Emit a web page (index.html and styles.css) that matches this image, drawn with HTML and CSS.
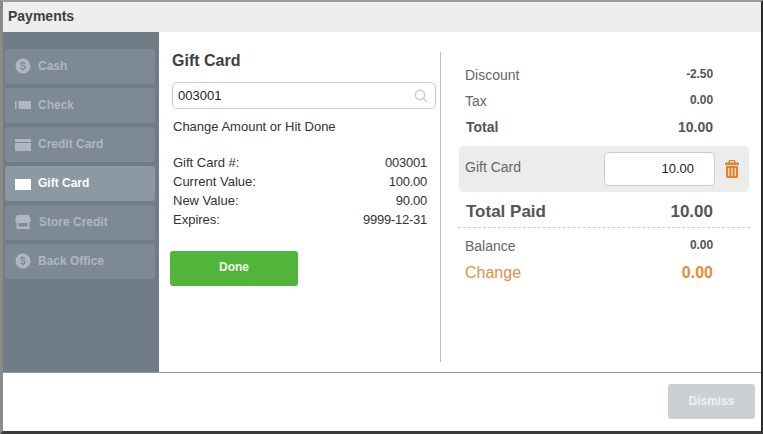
FILE: index.html
```html
<!DOCTYPE html>
<html lang="en">
<head>
<meta charset="utf-8">
<title>Payments</title>
<link rel="stylesheet" href="styles.css">
</head>
<body>
<div class="modal">
  <header class="modal-head">Payments</header>
  <main class="modal-main">
    <nav class="side">
      <a class="side-btn">
        <svg class="ico" viewBox="0 0 16 16"><path fill-rule="evenodd" d="M8 .5a7.5 7.5 0 1 0 0 15 7.5 7.5 0 0 0 0-15zM8 3.200v1.100c1.300.1 2.200.7 2.500 1.700l-1.300.4C9 5.800 8.600 5.400 7.900 5.400c-.7 0-1.100.3-1.100.8 0 .5.4.7 1.500 1 1.500.4 2.300 1 2.300 2.200 0 1.100-.8 1.900-2.100 2.100v1.300H7.400v-1.300c-1.300-.2-2.200-.9-2.400-2l1.300-.4c.2.8.8 1.200 1.600 1.200.8 0 1.300-.3 1.300-.9 0-.5-.4-.8-1.500-1.100C6.300 7.400 5.500 6.800 5.500 5.700c0-1.100.8-1.800 1.900-2.100V3.200z"/></svg>
        <span>Cash</span>
      </a>
      <a class="side-btn">
        <svg class="ico" viewBox="0 0 16 16"><path d="M0 4h1.500v8H0zM3.500 4H16v8H3.500z"/></svg>
        <span>Check</span>
      </a>
      <a class="side-btn">
        <svg class="ico" viewBox="0 0 16 16"><path d="M0 3h16v3H0zM0 7h16v8H0z"/></svg>
        <span>Credit Card</span>
      </a>
      <a class="side-btn is-active">
        <svg class="ico" viewBox="0 0 16 16"><path d="M0 4h16v11H0z"/></svg>
        <span>Gift Card</span>
      </a>
      <a class="side-btn">
        <svg class="ico" viewBox="0 0 16 16"><path fill-rule="evenodd" d="M2 1h12l2 5.500c0 .8-.7 1.500-1.500 1.500v7h-13V8C.7 8 0 7.300 0 6.500zM3.500 9v3.500h9V9z"/></svg>
        <span class="store">Store Credit</span>
      </a>
      <a class="side-btn">
        <svg class="ico" viewBox="0 0 16 16"><path fill-rule="evenodd" d="M8 .5a7.500 7.500 0 1 0 0 15 7.500 7.500 0 0 0 0-15zM8 3.200v1.100c1.300.1 2.200.7 2.500 1.700l-1.300.4C9 5.800 8.600 5.400 7.900 5.400c-.7 0-1.100.3-1.100.8 0 .5.4.7 1.500 1 1.500.4 2.300 1 2.300 2.200 0 1.100-.8 1.900-2.100 2.100v1.300H7.400v-1.300c-1.300-.2-2.200-.9-2.400-2l1.300-.4c.2.8.8 1.200 1.600 1.200.8 0 1.300-.3 1.300-.9 0-.5-.4-.8-1.500-1.100C6.300 7.400 5.500 6.800 5.500 5.700c0-1.100.8-1.800 1.900-2.100V3.200z"/></svg>
        <span>Back Office</span>
      </a>
    </nav>
    <section class="entry">
      <h2 class="entry-title">Gift Card</h2>
      <div class="search">
        <span>003001</span>
        <svg class="search-ico" viewBox="0 0 14 14"><circle cx="6" cy="6" r="4.700"/><path d="M9.500 9.500 13 13"/></svg>
      </div>
      <p class="hint">Change Amount or Hit Done</p>
      <dl class="info">
        <div class="info-row"><dt>Gift Card #:</dt><dd>003001</dd></div>
        <div class="info-row"><dt>Current Value:</dt><dd>100.00</dd></div>
        <div class="info-row"><dt>New Value:</dt><dd>90.00</dd></div>
        <div class="info-row"><dt>Expires:</dt><dd>9999-12-31</dd></div>
      </dl>
      <button class="done">Done</button>
    </section>
    <section class="summary">
      <div class="sum-row"><span>Discount</span><b class="small">-2.50</b></div>
      <div class="sum-row tax"><span>Tax</span><b class="small">0.00</b></div>
      <div class="sum-row total"><b>Total</b><b>10.00</b></div>
      <div class="tender">
        <span>Gift Card</span>
        <div class="amount">10.00</div>
        <svg class="trash" viewBox="0 0 14 18"><path fill-rule="evenodd" d="M5 0h4c.8 0 1.300.5 1.500 1.200L10.800 2.500H13c.6 0 1 .4 1 1V5H0V3.500c0-.6.4-1 1-1h2.200l.3-1.300C3.700.5 4.200 0 5 0zM5 1.200l-.3 1.300h4.600L9 1.200zM1 6h12v10.300c0 1-.7 1.700-1.700 1.700H2.700C1.700 18 1 17.300 1 16.300zM3.200 8v8h1.200V8zM6.400 8v8h1.200V8zM9.600 8v8h1.200V8z"/></svg>
      </div>
      <div class="sum-row paid"><b>Total Paid</b><b>10.00</b></div>
      <div class="sum-row balance"><span>Balance</span><b class="small">0.00</b></div>
      <div class="sum-row change"><span>Change</span><b>0.00</b></div>
    </section>
  </main>
  <footer class="modal-foot"><button class="dismiss">Dismiss</button></footer>
</div>
</body>
</html>
```
FILE: styles.css
```css
* { box-sizing: border-box; }
html, body { height: 100%; }
body {
  margin: 0;
  border-style: solid;
  border-width: 2px 2px 3px 3px;
  border-color: #9a9a9a #2a2a2a #3c3c3c #8a8a8a;
  font-family: "Liberation Sans", Arial, sans-serif;
  color: #333;
  overflow: hidden;
}
.modal {
  height: 429px;
  background: #fff;
  display: flex;
  flex-direction: column;
}
.modal-head {
  height: 30px;
  flex: none;
  background: #eeeeee;
  padding: 6px 0 0 5px;
  font-size: 14px;
  line-height: 16px;
  font-weight: bold;
  color: #3d3f45;
}
.modal-main {
  height: 340px;
  flex: none;
  display: flex;
}
.side {
  width: 156px;
  flex: none;
  padding: 17px 4px 0 2px;
  background: #707d89;
  display: flex;
  flex-direction: column;
  gap: 4px;
}
.side-btn {
  height: 35px;
  flex: none;
  display: flex;
  align-items: center;
  gap: 7px;
  padding: 0 0 2px 11px;
  border-radius: 4px;
  background: #7d8995;
  color: #afb7bf;
  font-size: 12px;
  font-weight: bold;
}
.side-btn.is-active { background: #8c98a2; color: #fff; }
.ico { width: 16px; height: 16px; flex: none; fill: currentColor; margin-left: -1px; }
.store { margin-left: 1px; }
.entry {
  width: 282px;
  flex: none;
  margin-top: 20px;
  height: 310px;
  border-right: 1px solid #bbb;
  padding: 0 4px 0 13px;
}
.entry-title {
  margin: 0;
  font-size: 16px;
  line-height: 18px;
  font-weight: bold;
  color: #3d3f45;
}
.search {
  margin-top: 12px;
  height: 27px;
  border: 1px solid #ccc;
  border-radius: 5px;
  display: flex;
  align-items: center;
  justify-content: space-between;
  padding: 0 7px 0 5px;
  font-size: 13px;
  color: #1d1a33;
}
.search-ico { width: 14px; height: 14px; fill: none; stroke: #ccc; stroke-width: 1.500; }
.hint { margin: 10px 0 0 1px; font-size: 13px; line-height: 15px; color: #333; }
.info { margin: 21px 9px 0 1px; font-size: 13px; color: #333; }
.info-row { display: flex; justify-content: space-between; height: 19px; line-height: 15px; }
.info dd { margin: 0; letter-spacing: -.25px; }
.done {
  display: block;
  margin: 20px 0 0 -2px;
  width: 128px;
  height: 35px;
  border: 0;
  border-radius: 3px;
  background: #52b53b;
  color: #eef8eb;
  font: bold 12px "Liberation Sans", Arial, sans-serif;
  padding: 0 0 3px;
}
.summary { flex: 1; padding: 35px 12px 0 18px; }
.sum-row { display: flex; justify-content: space-between; padding: 0 36px 0 6px; color: #555; font-size: 14px; line-height: 16px; }
.sum-row span { color: #666; }
.small { font-size: 12px; line-height: 13px; color: #555; letter-spacing: -.1px; padding-top: 1px; }
.tax { margin-top: 10px; }
.total { margin-top: 10px; padding-left: 7px; }
.total b { color: #555; }
.tender {
  margin-top: 11px;
  height: 46px;
  background: #ececec;
  border-radius: 5px;
  display: flex;
  align-items: center;
  padding: 0 10px 0 6px;
  font-size: 14px;
  color: #666;
}
.tender span { flex: 1; padding-bottom: 4px; }
.amount {
  width: 111px;
  height: 34px;
  background: #fff;
  border: 1px solid #ccc;
  border-radius: 5px;
  padding-right: 20px;
  text-align: right;
  font-size: 13px;
  line-height: 32px;
  color: #1d1a33;
}
.trash { width: 14px; height: 18px; margin-left: 10px; fill: #e58026; }
.paid { margin: 10px -1px 0; padding: 1px 37px 6px 8px; border-bottom: 1px dashed #ccc; font-size: 17px; line-height: 18px; }
.paid b { color: #555; }
.balance { margin-top: 10px; align-items: flex-start; }
.change { margin-top: 10px; font-size: 16px; line-height: 18px; }
.change span { color: #e88b49; }
.change b { color: #e88b32; }
.modal-foot {
  flex: 1;
  border-top: 1px solid #999;
  display: flex;
  justify-content: flex-end;
  padding: 11px 6px 0 0;
  align-items: flex-start;
}
.dismiss {
  width: 87px;
  height: 35px;
  border: 0;
  border-radius: 3px;
  background: #cbd0d5;
  color: #eef0f2;
  font: bold 12px "Liberation Sans", Arial, sans-serif;
  padding: 0 0 2px;
}
```
